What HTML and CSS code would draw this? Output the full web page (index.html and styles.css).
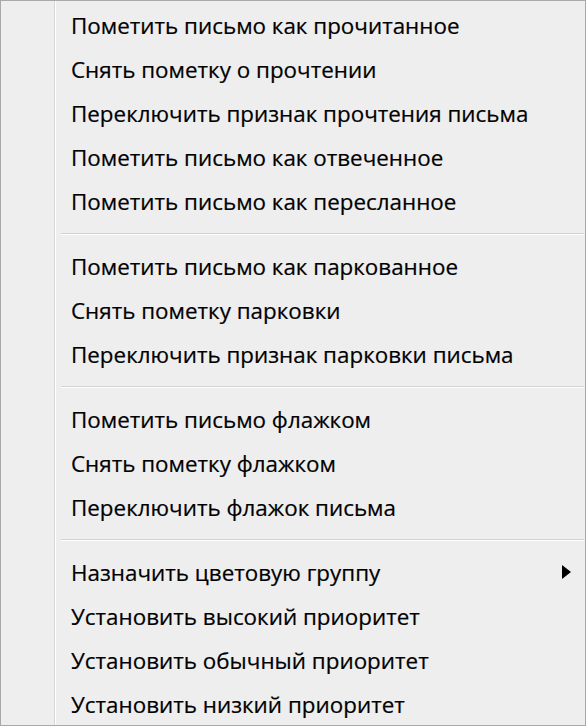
FILE: index.html
```html
<!DOCTYPE html>
<html lang="ru">
<head>
<meta charset="utf-8">
<link rel="stylesheet" href="styles.css">
</head>
<body>
<div class="menu">
  <div class="item">Пометить письмо как прочитанное</div>
  <div class="item">Снять пометку о прочтении</div>
  <div class="item">Переключить признак прочтения письма</div>
  <div class="item">Пометить письмо как отвеченное</div>
  <div class="item">Пометить письмо как пересланное</div>
  <div class="sep"></div>
  <div class="item">Пометить письмо как паркованное</div>
  <div class="item">Снять пометку парковки</div>
  <div class="item">Переключить признак парковки письма</div>
  <div class="sep"></div>
  <div class="item">Пометить письмо флажком</div>
  <div class="item">Снять пометку флажком</div>
  <div class="item">Переключить флажок письма</div>
  <div class="sep"></div>
  <div class="item sub">Назначить цветовую группу<span class="arrow"></span></div>
  <div class="item">Установить высокий приоритет</div>
  <div class="item">Установить обычный приоритет</div>
  <div class="item">Установить низкий приоритет</div>
</div>
</body>
</html>
```
FILE: styles.css
```css
html, body {
  margin: 0;
  padding: 0;
  background: #ffffff;
}
.menu {
  width: 586px;
  height: 726px;
  box-sizing: border-box;
  border: 1px solid #a8a8a8;
  background: #eeeeee;
  padding-top: 2px;
  position: relative;
  font-family: "Open Sans", "Noto Sans", sans-serif;
  color: #000;
}
.menu::before {
  content: "";
  position: absolute;
  left: 53px;
  top: 0;
  bottom: 0;
  width: 1px;
  background: #d6d6d6;
  border-right: 1px solid #ffffff;
}
.item {
  height: 44px;
  display: flex;
  align-items: center;
  padding-left: 70px;
  padding-right: 14px;
  font-size: 22.4px;
  white-space: nowrap;
  -webkit-text-stroke: 0.2px #000;
}
.sub {
  justify-content: space-between;
}
.arrow {
  width: 0;
  height: 0;
  border-top: 7.5px solid transparent;
  border-bottom: 7.5px solid transparent;
  border-left: 9px solid #000;
}
.sep {
  height: 21px;
  display: flex;
  align-items: center;
  margin-left: 60px;
  margin-right: 1px;
}
.sep::after {
  content: "";
  display: block;
  width: 100%;
  height: 1px;
  background: #d2d2d2;
  border-bottom: 1px solid #ffffff;
}
```
